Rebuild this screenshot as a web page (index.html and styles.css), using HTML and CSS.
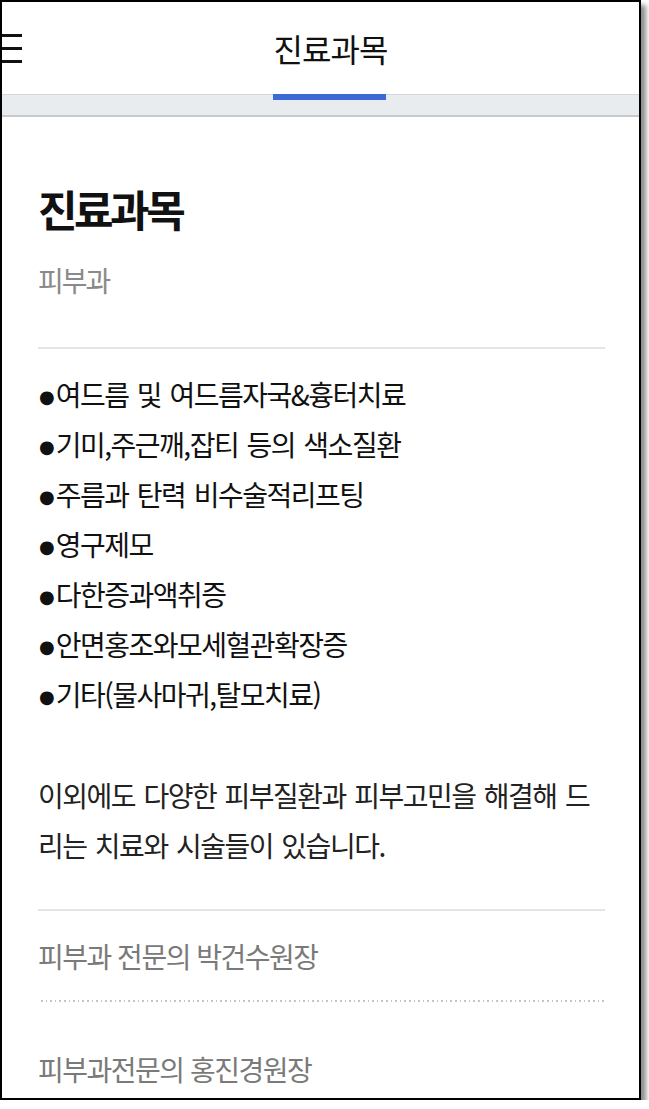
FILE: index.html
```html
<!DOCTYPE html>
<html lang="ko">
<head>
    <meta charset="UTF-8">
    <meta name="viewport" content="width=device-width, initial-scale=1.0">
    <title>진료과목</title>
    <link rel="stylesheet" href="styles.css">
</head>
<body>
    <div class="frame">
        <header class="topbar">
            <button class="menu-btn" aria-label="메뉴">
                <svg width="20" height="29" viewBox="0 0 20 29">
                    <rect x="0" y="0" width="20" height="3" fill="#111"/>
                    <rect x="0" y="13" width="20" height="3" fill="#111"/>
                    <rect x="0" y="26" width="20" height="3" fill="#111"/>
                </svg>
            </button>
            <div class="topbar-title">진료과목</div>
        </header>
        <div class="tabbar">
            <span class="tab-indicator"></span>
        </div>

        <main class="content">
            <h1>진료과목</h1>
            <p class="dept">피부과</p>
            <hr class="rule">

            <ul class="treatments">
                <li><span class="dot">●</span>여드름 및 여드름자국&amp;흉터치료</li>
                <li><span class="dot">●</span>기미,주근깨,잡티 등의 색소질환</li>
                <li><span class="dot">●</span>주름과 탄력 비수술적리프팅</li>
                <li><span class="dot">●</span>영구제모</li>
                <li><span class="dot">●</span>다한증과액취증</li>
                <li><span class="dot">●</span>안면홍조와모세혈관확장증</li>
                <li><span class="dot">●</span>기타(물사마귀,탈모치료)</li>
            </ul>

            <p class="intro">이외에도 다양한 피부질환과 피부고민을 해결해 드리는 치료와 시술들이 있습니다.</p>

            <hr class="rule">

            <ul class="doctors">
                <li>피부과 전문의 박건수원장</li>
                <li>피부과전문의 홍진경원장</li>
            </ul>
        </main>
    </div>
</body>
</html>
```

FILE: styles.css
```css
* {
    margin: 0;
    padding: 0;
    box-sizing: border-box;
}

body {
    font-family: "Noto Sans CJK KR", "Noto Sans", sans-serif;
    background-color: #fff;
    color: #111;
}

.frame {
    width: 641px;
    height: 1100px;
    border: 2px solid #000;
    background-color: #fff;
    overflow: hidden;
    box-shadow: 5px 5px 5px rgba(0, 0, 0, 0.45);
}

/* 상단 바 */
.topbar {
    display: flex;
    align-items: center;
    height: 92px;
}

.menu-btn {
    display: flex;
    width: 20px;
    border: none;
    background: none;
}

.topbar-title {
    margin: 0 auto;
    font-size: 32px;
    letter-spacing: -1px;
    color: #111;
    line-height: 1;
}

.tabbar {
    height: 23px;
    background-color: #e9ecef;
    border-top: 1px solid #d5d8db;
    border-bottom: 2px solid #c7c9cb;
}

.tab-indicator {
    display: block;
    width: 113px;
    height: 6px;
    margin: -1px 0 0 271px;
    background-color: #3d69d7;
}

/* 본문 */
.content {
    padding: 67px 34px 0 36px;
}

.content h1 {
    font-size: 43px;
    line-height: 48px;
    font-weight: bold;
    letter-spacing: -3.5px;
    color: #111;
}

.dept {
    margin-top: 28px;
    font-size: 28px;
    line-height: 40px;
    letter-spacing: -2px;
    color: #8a8a8a;
}

.rule {
    border: none;
    height: 2px;
    background-color: #e5e5e5;
}

.dept + .rule {
    margin-top: 47px;
}

.treatments {
    list-style: none;
    margin-top: 20px;
}

.treatments li {
    font-size: 28px;
    line-height: 50px;
    letter-spacing: -1.5px;
    word-spacing: 2px;
    color: #111;
}

.treatments .dot {
    font-family: "DejaVu Sans", sans-serif;
    font-size: 18px;
    line-height: 0;
    letter-spacing: 0;
    margin: 0 1px 0 1px;
    vertical-align: 3px;
}

.intro {
    margin-top: 51px;
    font-size: 28px;
    line-height: 50px;
    letter-spacing: -1.5px;
    word-spacing: 2px;
    color: #222;
}

.intro + .rule {
    margin-top: 39px;
}

.doctors {
    list-style: none;
}

.doctors li {
    font-size: 28px;
    line-height: 40px;
    letter-spacing: -1.5px;
    color: #7a7a7a;
    padding: 25px 0 24px;
}

.doctors li + li {
    padding-top: 49px;
    background-image: repeating-linear-gradient(to right, #c4c4c4 0, #c4c4c4 1.6px, transparent 1.6px, transparent 4.6px);
    background-size: 100% 2px;
    background-position: 3px 0;
    background-repeat: no-repeat;
}
```
